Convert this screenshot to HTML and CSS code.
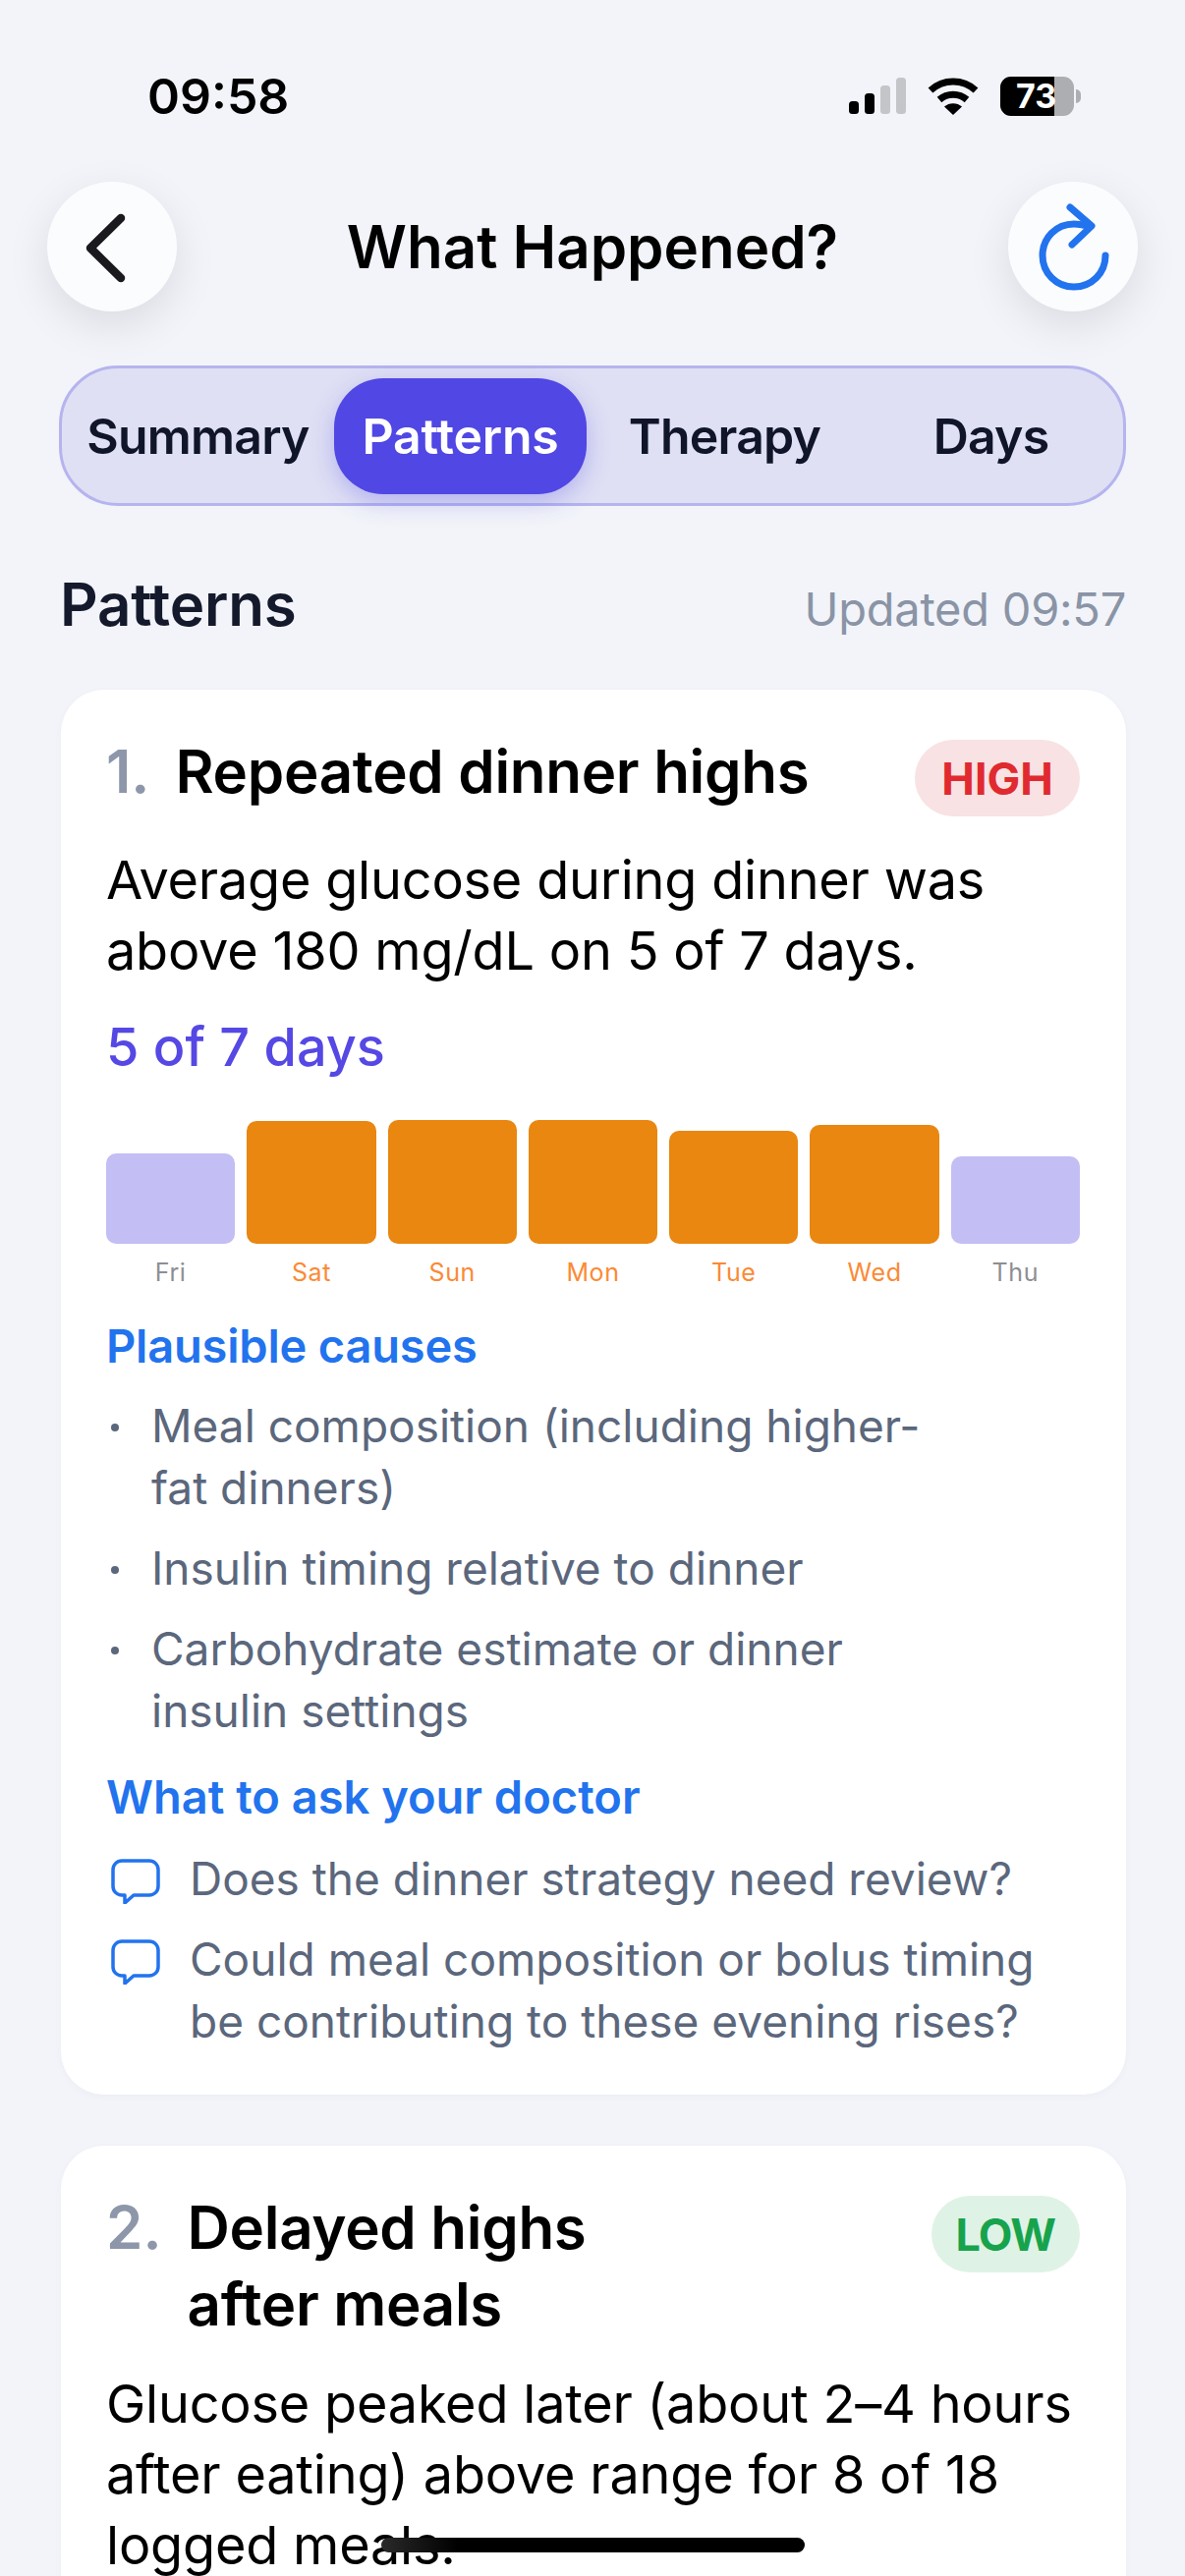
FILE: index.html
```html
<!DOCTYPE html>
<html lang="en">
<head>
<meta charset="utf-8">
<title>What Happened?</title>
<link rel="stylesheet" href="styles.css">
</head>
<body>
<div class="phone">
  <header class="status">
    <span class="time">09:58</span>
    <div class="status-icons">
      <svg class="signal" width="58" height="38" viewBox="0 0 58 38"><rect x="0" y="24" width="10" height="13" rx="3.5" fill="#000"/><rect x="16" y="16" width="10" height="21" rx="3.5" fill="#000"/><rect x="32" y="8" width="10" height="29" rx="3.5" fill="#c4c5c8"/><rect x="48" y="0" width="10" height="37" rx="3.5" fill="#c4c5c8"/></svg>
      <svg class="wifi" width="52" height="38" viewBox="0 0 52 38"><path d="M3 13C16 1 36 1 49 13" fill="none" stroke="#000" stroke-width="7"/><path d="M12 22.500C20 15.500 32 15.500 40 22.500" fill="none" stroke="#000" stroke-width="7"/><path d="M17 29.500C22 25 30 25 35 29.500L26 38Z" fill="#000"/></svg>
      <div class="battery"><div class="battery-body"><span class="battery-fill"></span><span class="battery-num">73</span></div><span class="battery-cap"></span></div>
    </div>
  </header>

  <nav class="topbar">
    <button class="round">
      <svg width="60" height="74" viewBox="0 0 60 74"><path d="M39 8L8 38.500L39 69" fill="none" stroke="#1a1a1e" stroke-width="8.500" stroke-linecap="round" stroke-linejoin="round"/></svg>
    </button>
    <h1 class="title">What Happened?</h1>
    <button class="round">
      <svg width="76" height="90" viewBox="0 0 76 90"><path d="M52 24C47 22.500 43 22 39 22C21 22 7 36 7 54C7 72 21 86 39 86C57 86 71 72 71 54" fill="none" stroke="#2273ee" stroke-width="7" stroke-linecap="round"/><path d="M35 5L57 24L37 43" fill="none" stroke="#2273ee" stroke-width="7" stroke-linecap="round" stroke-linejoin="round"/></svg>
    </button>
  </nav>

  <div class="tabs">
    <span class="tab">Summary</span>
    <span class="tab tab-active">Patterns</span>
    <span class="tab">Therapy</span>
    <span class="tab">Days</span>
  </div>

  <div class="section-head">
    <h2 class="section-title">Patterns</h2>
    <span class="updated">Updated 09:57</span>
  </div>

  <article class="card card-first">
    <div class="card-head">
      <span class="num">1.</span>
      <h3 class="card-title">Repeated dinner highs</h3>
      <span class="pill pill-high">HIGH</span>
    </div>
    <p class="desc">Average glucose during dinner was above 180 mg/dL on 5 of 7 days.</p>
    <p class="count">5 of 7 days</p>
    <div class="chart">
      <div class="col"><div class="bar-slot"><div class="bar bar-low" style="height:92px"></div></div><span class="day">Fri</span></div>
      <div class="col"><div class="bar-slot"><div class="bar bar-high" style="height:125px"></div></div><span class="day day-high">Sat</span></div>
      <div class="col"><div class="bar-slot"><div class="bar bar-high" style="height:126px"></div></div><span class="day day-high">Sun</span></div>
      <div class="col"><div class="bar-slot"><div class="bar bar-high" style="height:126px"></div></div><span class="day day-high">Mon</span></div>
      <div class="col"><div class="bar-slot"><div class="bar bar-high" style="height:115px"></div></div><span class="day day-high">Tue</span></div>
      <div class="col"><div class="bar-slot"><div class="bar bar-high" style="height:121px"></div></div><span class="day day-high">Wed</span></div>
      <div class="col"><div class="bar-slot"><div class="bar bar-low" style="height:89px"></div></div><span class="day">Thu</span></div>
    </div>
    <h4 class="sub">Plausible causes</h4>
    <ul class="causes">
      <li>Meal composition (including higher-<br>fat dinners)</li>
      <li>Insulin timing relative to dinner</li>
      <li>Carbohydrate estimate or dinner<br>insulin settings</li>
    </ul>
    <h4 class="sub sub-ask">What to ask your doctor</h4>
    <ul class="asks">
      <li><svg class="bubble" width="50" height="46" viewBox="0 0 50 46"><path d="M11 2H39C44 2 48 6 48 11V28C48 33 44 37 39 37H23L14 45V37H11C6 37 2 33 2 28V11C2 6 6 2 11 2Z" fill="none" stroke="#2273ee" stroke-width="3.500" stroke-linejoin="round"/></svg><span>Does the dinner strategy need review?</span></li>
      <li><svg class="bubble" width="50" height="46" viewBox="0 0 50 46"><path d="M11 2H39C44 2 48 6 48 11V28C48 33 44 37 39 37H23L14 45V37H11C6 37 2 33 2 28V11C2 6 6 2 11 2Z" fill="none" stroke="#2273ee" stroke-width="3.500" stroke-linejoin="round"/></svg><span>Could meal composition or bolus timing be contributing to these evening rises?</span></li>
    </ul>
  </article>

  <article class="card">
    <div class="card-head">
      <span class="num">2.</span>
      <h3 class="card-title">Delayed highs<br>after meals</h3>
      <span class="pill pill-low">LOW</span>
    </div>
    <p class="desc">Glucose peaked later (about 2–4 hours after eating) above range for 8 of 18 logged meals.</p>
  </article>

  <div class="home-indicator"></div>
</div>
</body>
</html>
```
FILE: styles.css
```css
* { box-sizing: border-box; }
html, body { margin: 0; padding: 0; }
body { background: #f2f4f9; font-family: Inter, "Liberation Sans", sans-serif; color: #000; }
.phone { position: relative; width: 1206px; height: 2622px; padding-top: 68px; overflow: hidden; background: #f2f4f9; }

.status { display: flex; justify-content: space-between; align-items: center; height: 60px; padding: 0 106px 0 150px; }
.time { font-size: 50px; font-weight: 600; line-height: 60px; }
.status-icons { display: flex; align-items: center; gap: 22px; }
.battery { display: flex; align-items: center; gap: 2px; }
.battery-body { position: relative; width: 75px; height: 40px; border-radius: 11px; overflow: hidden; background: #adaeb1; }
.battery-fill { position: absolute; left: 0; top: 0; bottom: 0; width: 55px; background: #000; }
.battery-num { position: absolute; left: 16px; top: 0; line-height: 40px; font-size: 34px; font-weight: 700; color: #fff; }
.battery-cap { width: 5px; height: 14px; border-radius: 0 5px 5px 0; background: #adaeb1; }

.topbar { display: flex; justify-content: space-between; align-items: center; margin-top: 57px; padding: 0 48px; }
.round { display: flex; align-items: center; justify-content: center; width: 132px; height: 132px; padding: 0; border: 0; border-radius: 50%; background: #fbfcfe; box-shadow: 0 14px 44px rgba(0,0,0,.1); }
.title { margin: 0; font-size: 60px; font-weight: 600; line-height: 72px; letter-spacing: 0; }

.tabs { display: grid; grid-template-columns: 277px 257px 281px 1fr; align-items: center; height: 143px; margin: 55px 60px 0 60px; padding: 10px 4px 10px 0; border: 3px solid #b6b4ee; border-radius: 60px; background: #dfe0f4; }
.tab { display: flex; align-items: center; justify-content: center; height: 118px; font-size: 50px; font-weight: 600; letter-spacing: -.8px; color: #11152a; }
.tab-active { border-radius: 50px; background: #5047e4; color: #fff; letter-spacing: -.2px; box-shadow: 0 8px 24px rgba(80,71,228,.3); }

.section-head { display: flex; justify-content: space-between; align-items: baseline; margin: 65px 60px 0 61px; }
.section-title { margin: 0; font-size: 60px; font-weight: 600; line-height: 70px; letter-spacing: -.2px; color: #141a2c; }
.updated { font-size: 47px; letter-spacing: -.25px; color: #8a94a6; }

.card { margin: 0 60px 52px 62px; padding: 44px 47px 43px 46px; border-radius: 44px; background: #fff; box-shadow: 0 2px 8px rgba(20,30,60,.03); }
.card-first { margin-top: 52px; }
.card-head { display: flex; align-items: flex-start; }
.num { margin-right: 26px; font-size: 60px; font-weight: 600; line-height: 78px; color: #8d97a9; }
.card-title { flex: 1; margin: 0; font-size: 60px; font-weight: 600; line-height: 78px; letter-spacing: -.3px; }
.pill { display: flex; align-items: center; justify-content: center; height: 78px; padding: 0 27px; margin: 7px 0 2px; border-radius: 39px; font-size: 45px; font-weight: 700; }
.pill-high { background: #f8e2e3; color: #e02a2f; }
.pill-low { padding: 0 25px; letter-spacing: -1px; background: #dff2e6; color: #17a34c; }
.desc { margin: 27px 0 0; font-size: 54px; line-height: 72px; letter-spacing: -.2px; color: #000; }
.count { margin: 26px 0 0; font-size: 54px; font-weight: 500; line-height: 72px; color: #5548e4; }

.chart { display: grid; grid-template-columns: repeat(7, 1fr); gap: 12px; margin-top: 34px; }
.col { display: flex; flex-direction: column; align-items: stretch; }
.bar-slot { display: flex; align-items: flex-end; height: 130px; }
.bar { width: 100%; border-radius: 10px; }
.bar-low { background: #c3bef4; }
.bar-high { background: #e98710; }
.day { margin-top: 13px; text-align: center; font-size: 25px; line-height: 32px; letter-spacing: .6px; color: #8e8e93; }
.day-high { color: #fb8a35; }

.sub { margin: 0; font-size: 47px; font-weight: 600; line-height: 60px; color: #2273ee; }
.chart + .sub { margin-top: 29px; letter-spacing: -.2px; }
.sub-ask { margin-top: 26px; }
.causes { margin: 20px 0 0; padding: 0; list-style: none; }
.causes li { position: relative; margin-bottom: 19px; padding-left: 46px; font-size: 46px; line-height: 63px; color: #5b677c; }
.causes li:last-child { margin-bottom: 0; }
.causes li::before { content: ""; position: absolute; left: 5px; top: 29px; width: 8px; height: 8px; border-radius: 50%; background: #5b677c; }
.asks { margin: 22px 0 0; padding: 0; list-style: none; }
.asks li { display: flex; gap: 30px; margin-bottom: 19px; font-size: 46px; line-height: 63px; color: #5b677c; }
.asks li:last-child { margin-bottom: 0; }
.bubble { flex: none; margin: 11px 0 0 5px; }

.home-indicator { position: absolute; left: 388px; top: 2583px; width: 431px; height: 15px; border-radius: 8px; background: linear-gradient(90deg, #2a2a2a, #000 18%); }
```
